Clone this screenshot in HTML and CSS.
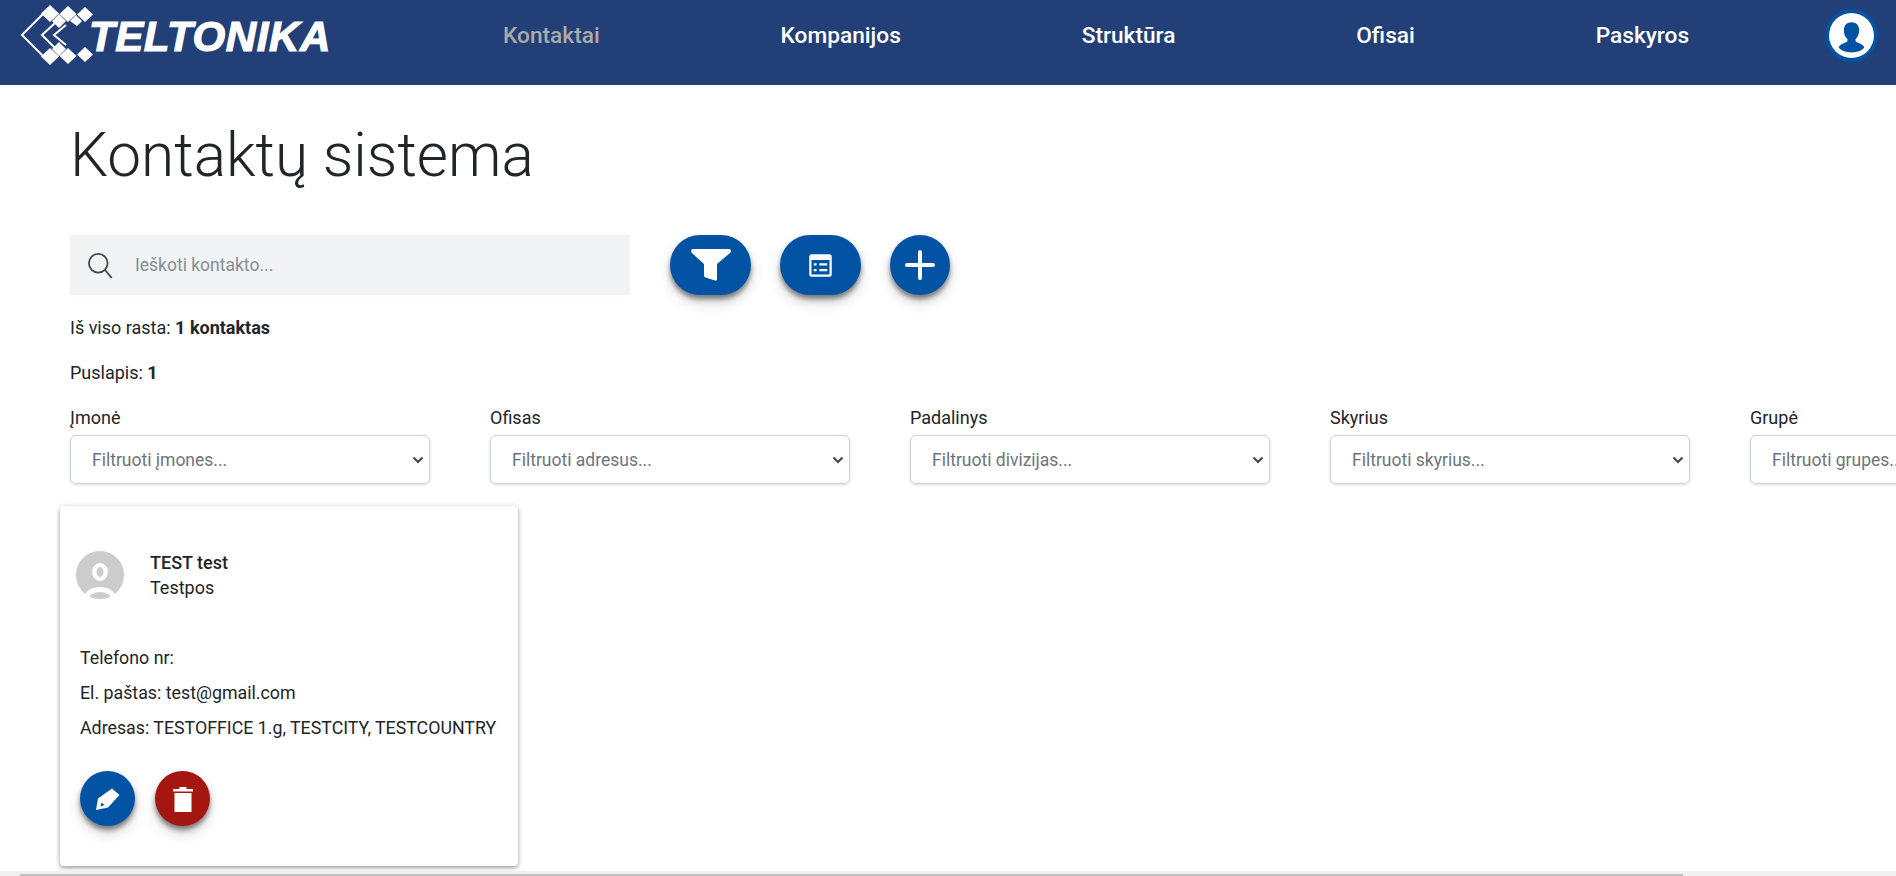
FILE: index.html
```html
<!DOCTYPE html>
<html lang="lt">
<head>
    <meta charset="UTF-8">
    <meta name="viewport" content="width=device-width, initial-scale=1.0">
    <title>Kontaktų sistema</title>
    <link rel="stylesheet" href="styles.css">
</head>
<body>
    <header class="topbar">
        <a class="logo" href="#">
            <svg class="logo-mark" viewBox="0 0 73 60" width="73" height="60">
                <path d="M30 0l9 8.500-9 8.500-9-8.500zM48 1l8.500 8-8.500 8-8.500-8zM65 2l8 7.500-8 7.500-8-7.500zM39 9l7 7-7 7-7-7zM56 10l6 6-5 5-7-5z" fill="#fff"/>
                <path d="M30 43l9 8.500-9 8.500-9-8.500zM48 43l8.500 8-8.500 8-8.500-8zM65 42l8 7.500-8 7.500-8-7.500zM39 37l7 7-7 7-7-7z" fill="#fff"/>
                <path d="M23 9L2 30l21 21M35 18L22 30l13 13M46 20L34 30l12 10" fill="none" stroke="#fff" stroke-width="2"/>
            </svg>
            <span class="logo-text">TELTONIKA</span>
        </a>
        <nav class="mainnav">
            <a class="navlink navlink-active" href="#">Kontaktai</a>
            <a class="navlink" href="#">Kompanijos</a>
            <a class="navlink" href="#">Struktūra</a>
            <a class="navlink" href="#">Ofisai</a>
            <a class="navlink" href="#">Paskyros</a>
        </nav>
        <div class="userbtn">
            <svg viewBox="0 0 44 44" width="45" height="45">
                <circle cx="22" cy="22" r="22" fill="#fff"/>
                <path d="M22 9c-5 0-7.500 3.500-7.500 8 0 3.500 1.500 6.500 3.500 8.500v2c0 1.500-8 2-8.500 6.500 2.500 3 7 4.500 12.500 4.500s10-1.500 12.500-4.500c-.5-4.500-8.500-5-8.500-6.500v-2c2-2 3.500-5 3.500-8.500 0-4.500-2.500-8-7.500-8z" fill="#0353a4"/>
            </svg>
        </div>
    </header>

    <main class="content">
        <h1 class="pagetitle">Kontaktų sistema</h1>

        <div class="toolbar">
            <label class="searchbox">
                <svg viewBox="0 0 24 24" width="28" height="28" fill="none" stroke="#444" stroke-width="1.500">
                    <circle cx="10.500" cy="10.500" r="8"/>
                    <path d="M16.500 16.500L22 23"/>
                </svg>
                <input class="searchinput" type="text" placeholder="Ieškoti kontakto...">
            </label>
            <button class="fab fab-wide" type="button">
                <svg viewBox="0 0 42 32" width="42" height="32"><path d="M1 2Q1 0 3 0h36q2 0 2 2 0 1-1 2L27 15v15q0 2-2 1.500l-9.500-3q-1.500-.5-1.500-2V15L2 4Q1 3 1 2z" fill="#fff"/></svg>
            </button>
            <button class="fab fab-wide" type="button">
                <svg viewBox="0 0 24 24" width="27" height="27" fill="#fff"><path d="M2 4a2 2 0 0 1 2-2h16a2 2 0 0 1 2 2v16a2 2 0 0 1-2 2H4a2 2 0 0 1-2-2zm2 3v13h16V7z"/><path d="M6 10h2.500v2H6zM11 10h7v2h-7zM6 15h2.500v2H6zM11 15h7v2h-7z"/></svg>
            </button>
            <button class="fab" type="button">
                <svg viewBox="0 0 30 30" width="30" height="30"><path d="M15 2v26M2 15h26" stroke="#fff" stroke-width="4" stroke-linecap="round"/></svg>
            </button>
        </div>

        <p class="info">Iš viso rasta: <b>1 kontaktas</b></p>
        <p class="info">Puslapis: <b>1</b></p>

        <div class="filters">
            <div class="filter">
                <label class="filter-label">Įmonė</label>
                <div class="filter-select">Filtruoti įmones...<svg class="chevron" viewBox="0 0 12 8" width="12" height="8"><path d="M1.500 1.500L6 6l4.500-4.500" fill="none" stroke="#444" stroke-width="2"/></svg></div>
            </div>
            <div class="filter">
                <label class="filter-label">Ofisas</label>
                <div class="filter-select">Filtruoti adresus...<svg class="chevron" viewBox="0 0 12 8" width="12" height="8"><path d="M1.500 1.500L6 6l4.500-4.500" fill="none" stroke="#444" stroke-width="2"/></svg></div>
            </div>
            <div class="filter">
                <label class="filter-label">Padalinys</label>
                <div class="filter-select">Filtruoti divizijas...<svg class="chevron" viewBox="0 0 12 8" width="12" height="8"><path d="M1.500 1.500L6 6l4.500-4.500" fill="none" stroke="#444" stroke-width="2"/></svg></div>
            </div>
            <div class="filter">
                <label class="filter-label">Skyrius</label>
                <div class="filter-select">Filtruoti skyrius...<svg class="chevron" viewBox="0 0 12 8" width="12" height="8"><path d="M1.500 1.500L6 6l4.500-4.500" fill="none" stroke="#444" stroke-width="2"/></svg></div>
            </div>
            <div class="filter">
                <label class="filter-label">Grupė</label>
                <div class="filter-select">Filtruoti grupes...<svg class="chevron" viewBox="0 0 12 8" width="12" height="8"><path d="M1.500 1.500L6 6l4.500-4.500" fill="none" stroke="#444" stroke-width="2"/></svg></div>
            </div>
        </div>

        <article class="card">
            <div class="card-head">
                <svg class="avatar" viewBox="0 0 48 48" width="48" height="48">
                    <defs><clipPath id="avatar-clip"><circle cx="24" cy="24" r="24"/></clipPath></defs>
                    <circle cx="24" cy="24" r="24" fill="#ccc"/>
                    <g clip-path="url(#avatar-clip)">
                        <ellipse cx="24" cy="21" rx="8" ry="9" fill="#fff"/>
                        <ellipse cx="24" cy="21" rx="3.500" ry="5" fill="#ccc"/>
                        <ellipse cx="24" cy="47" rx="16" ry="11" fill="#fff"/>
                        <ellipse cx="24" cy="48" rx="11" ry="7" fill="#ccc"/>
                    </g>
                </svg>
                <div class="card-names">
                    <div class="card-name">TEST test</div>
                    <div class="card-pos">Testpos</div>
                </div>
            </div>
            <p class="card-line">Telefono nr:</p>
            <p class="card-line">El. paštas: test@gmail.com</p>
            <p class="card-line">Adresas: TESTOFFICE 1.g, TESTCITY, TESTCOUNTRY</p>
            <div class="card-actions">
                <button class="fab fab-small" type="button">
                    <svg viewBox="0 0 26 24" width="26" height="24"><path d="M17 1.500l7.500 6.500L13 20.500 1 23l2-11.500zM5.500 19.500l4-1.500-3-2.500z" fill="#fff" fill-rule="evenodd"/></svg>
                </button>
                <button class="fab fab-small fab-red" type="button">
                    <svg viewBox="0 0 22 26" width="22" height="26" fill="#fff"><path d="M1 3h6.500V1h7v2H21v2.500H1zM2.500 7h17v19h-17z"/></svg>
                </button>
            </div>
        </article>
    </main>

    <div class="hscroll"><div class="hscroll-thumb"></div></div>
</body>
</html>
```

FILE: styles.css
```css
html, body { margin: 0; height: 876px; overflow: hidden; background: #fff; }
body { font-family: Roboto, "Liberation Sans", sans-serif; color: #212529; position: relative; }
a { text-decoration: none; }
p { margin: 0; }

.topbar { display: flex; align-items: center; height: 85px; background: #223f77; width: 1896px; }
.logo { display: flex; align-items: center; padding-left: 20px; width: 503px; box-sizing: border-box; flex: none; margin-bottom: 15px; }
.logo-mark { flex: none; margin-right: -4px; }
.logo-text { font-family: "Liberation Sans", sans-serif; font-size: 42px; font-weight: 700; font-style: italic; color: #fff; letter-spacing: 0.6px; -webkit-text-stroke: 1.2px #fff; margin-top: 4px; }
.mainnav { display: flex; flex: none; gap: 180.8px; margin-bottom: 15px; }
.navlink { font-size: 22.7px; font-weight: 500; color: #fff; }
.navlink-active { color: #aaa; }
.userbtn { width: 45px; height: 45px; margin: 0 18px 15px auto; border: 4px solid #0353a4; border-radius: 50%; flex: none; }
.userbtn svg { display: block; }

.content { padding: 0 0 0 70px; width: 2000px; box-sizing: border-box; }
.pagetitle { font-size: 60.3px; font-weight: 300; margin: 32px 0 0; line-height: 77px; color: #212529; }
.toolbar { display: flex; align-items: flex-start; margin-top: 41px; gap: 29px; }
.searchbox { display: flex; align-items: center; width: 560px; height: 60px; background: #f1f3f4; box-sizing: border-box; padding-left: 16px; margin-right: 11px; gap: 19px; box-shadow: 0 1px 2px rgba(0,0,0,.04); }
.searchinput { border: 0; background: transparent; outline: 0; font: 17.5px Roboto, sans-serif; flex: 1; }
.searchinput::placeholder { color: #868e96; }
.fab { width: 60px; height: 60px; border: 0; border-radius: 50%; background: #0353a4; padding: 0; display: flex; align-items: center; justify-content: center; box-shadow: 0 4px 5px rgba(0,0,0,.45), 0 8px 14px rgba(0,0,0,.15); flex: none; }
.fab-wide { width: 81px; border-radius: 30px; }
.info { font-size: 18px; line-height: 24px; margin-top: 21px; }
.toolbar + .info { margin-top: 21px; }
.info b { font-weight: 700; }

.filters { display: flex; gap: 60px; margin-top: 21px; }
.filter { width: 360px; flex: none; }
.filter-label { display: block; font-size: 18px; line-height: 24px; margin-bottom: 5px; }
.filter-select { display: flex; align-items: center; justify-content: space-between; height: 49px; box-sizing: border-box; border: 1px solid #ced4da; border-radius: 6px; padding: 0 5px 0 21px; font-size: 17.5px; color: #6c757d; box-shadow: 0 1px 3px rgba(0,0,0,.15); }
.chevron { flex: none; }

.card { width: 458px; height: 360px; margin: 22px 0 0 -10px; box-sizing: border-box; padding: 44px 16px 0 20px; border-radius: 4px; background: #fff; box-shadow: 0 2px 4px rgba(0,0,0,.35), 0 0 6px rgba(0,0,0,.08); }
.card-head { display: flex; align-items: center; margin-left: -4px; gap: 26px; margin-bottom: 46px; }
.avatar { flex: none; }
.card-name { font-size: 18px; font-weight: 500; line-height: 25px; color: #212529; }
.card-pos { font-size: 18px; line-height: 25px; }
.card-line { font-size: 17.8px; line-height: 24px; margin-bottom: 11px; }
.card-actions { display: flex; gap: 20px; margin-top: 31px; }
.fab-small { width: 55px; height: 55px; }
.fab-red { background: #a51611; }

.hscroll { position: absolute; left: 0; right: 0; bottom: 0; height: 5px; padding-top: 3px; box-sizing: border-box; background: #f0f0f0; }
.hscroll-thumb { margin-left: 20px; width: 1663px; height: 100%; background: #c1c1c1; }
```
